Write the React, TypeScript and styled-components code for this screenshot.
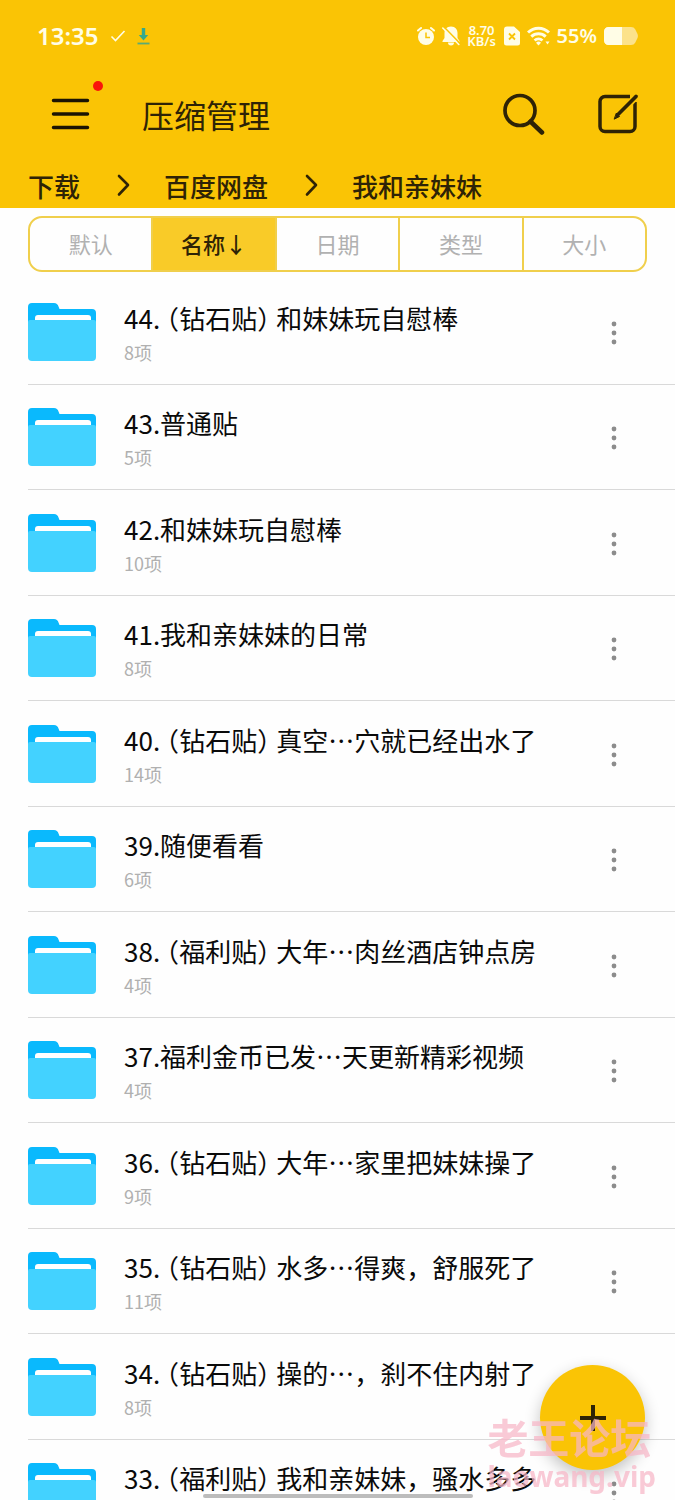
import React from "react";
import styled, { createGlobalStyle } from "styled-components";

const GlobalStyle = createGlobalStyle`
  * { box-sizing: border-box; }
  body {
    margin: 0;
    background: #fefefe;
    font-family: "Noto Sans CJK SC", "Noto Sans", sans-serif;
  }
  button {
    border: 0;
    padding: 0;
    background: none;
    font: inherit;
    color: inherit;
    cursor: pointer;
  }
  svg { display: block; }
`;

const ink = "#2e2306";
const gold = "#fac405";

const Page = styled.div`
  display: flex;
  flex-direction: column;
  height: 100vh;
  overflow: hidden;
`;

const Header = styled.header`
  flex: none;
  background: ${gold};
  color: ${ink};
`;

const StatusBar = styled.div`
  display: flex;
  align-items: center;
  height: 72px;
  padding: 0 37px;
  color: #fffde6;
  font-family: "Noto Sans", sans-serif;
  font-weight: 600;
`;

const StatusGroup = styled.div<{ $gap: number }>`
  display: flex;
  align-items: center;
  gap: ${(p) => p.$gap}px;
`;

const Clock = styled.time`
  font-size: 24px;
  line-height: 28px;
`;

const Spacer = styled.div`
  flex: 1;
`;

const Speed = styled.div`
  width: 30px;
  font-size: 13px;
  line-height: 11px;
  text-align: center;
`;

const Percent = styled.span`
  font-size: 20px;
  line-height: 24px;
`;

const AppBar = styled.div`
  display: flex;
  align-items: center;
  height: 84px;
  padding: 0 36px 0 50px;
`;

const IconButton = styled.button`
  position: relative;
  display: flex;
  flex: none;
`;

const Badge = styled.span`
  position: absolute;
  top: -16px;
  right: -12px;
  width: 10px;
  height: 10px;
  border-radius: 50%;
  background: #f9140a;
`;

const Title = styled.h1`
  flex: 1;
  margin: 0 0 0 51px;
  font-size: 32px;
  line-height: 40px;
  font-weight: 400;
`;

const Actions = styled.div`
  display: flex;
  gap: 52px;
`;

const Crumbs = styled.nav`
  display: flex;
  align-items: center;
  height: 52px;
  padding: 8px 28px 0;
`;

const Crumb = styled.a`
  color: ${ink};
  font-size: 26px;
  line-height: 36px;
  font-weight: 500;
  text-decoration: none;
`;

const CrumbArrow = styled.span`
  margin: 0 34px 0 35px;
`;

const SortBar = styled.div`
  display: flex;
  flex: none;
  height: 56px;
  margin: 8px 28px 7px;
  border: 2px solid #f0cf4c;
  border-radius: 14px;
  overflow: hidden;
`;

const SortButton = styled.button<{ $active?: boolean }>`
  flex: 1;
  padding-bottom: 2px;
  font-size: 22px;
  line-height: 32px;
  font-weight: ${(p) => (p.$active ? 500 : 400)};
  color: ${(p) => (p.$active ? ink : "#b1b1b1")};
  background: ${(p) => (p.$active ? "#f9cb28" : "transparent")};
  & + & {
    border-left: 2px solid #f0cf4c;
  }
`;

const List = styled.ul`
  flex: 1;
  min-height: 0;
  margin: 0 0 0 28px;
  padding: 0;
  list-style: none;
  overflow: hidden;
`;

const Row = styled.li`
  display: flex;
  align-items: center;
  height: 106px;
  border-bottom: 1px solid #d9d9d9;
  &:nth-child(even) {
    height: 105px;
  }
`;

const Info = styled.div`
  flex: 1;
  min-width: 0;
  margin-left: 28px;
`;

const Name = styled.div`
  color: #0a0a0a;
  font-size: 26px;
  line-height: 36px;
  white-space: nowrap;
`;

const Tag = styled.span`
  margin: 0 6px;
  font-feature-settings: "halt";
`;

const Count = styled.div`
  margin-top: 4px;
  color: #b0b0b0;
  font-size: 18px;
  line-height: 24px;
`;

const MoreButton = styled.button`
  flex: none;
  margin-right: 56px;
  padding-top: 2px;
`;

const AddButton = styled.button`
  position: fixed;
  right: 30px;
  bottom: 30px;
  display: grid;
  place-items: center;
  width: 105px;
  height: 105px;
  border-radius: 50%;
  background: ${gold};
  color: ${ink};
  box-shadow: 0 6px 16px rgba(0, 0, 0, 0.24);
`;

const HomeBar = styled.div`
  position: fixed;
  left: 50%;
  bottom: 2px;
  width: 40%;
  height: 4px;
  border-radius: 2px;
  background: #bcbcbc;
  transform: translateX(-50%);
`;

const Watermark = styled.div`
  position: fixed;
  right: 19px;
  bottom: 8px;
  color: rgba(247, 182, 198, 0.72);
  font-weight: 700;
  pointer-events: none;
`;

const WatermarkName = styled.div`
  font-size: 41px;
  line-height: 40px;
`;

const WatermarkSite = styled.div`
  font-family: "Noto Sans", sans-serif;
  font-size: 28px;
  line-height: 32px;
  margin-top: 4px;
`;

const AlarmIcon = () => (
  <svg width="18" height="20" viewBox="0 0 18 20" aria-hidden="true">
    <circle cx="9" cy="11" r="8" fill="currentColor" />
    <path d="M1 4.5 4 2M17 4.5 14 2" stroke="currentColor" strokeWidth="2" strokeLinecap="round" />
    <path d="M9 6.500v5h4" fill="none" stroke={gold} strokeWidth="1.500" />
  </svg>
);

const MutedBellIcon = () => (
  <svg width="18" height="20" viewBox="0 0 18 20" aria-hidden="true">
    <path d="M9 .5c4.500 0 6.500 3 6.500 6.500v5l2 3v1H.5v-1l2-3V7c0-3.500 2-6.500 6.500-6.500Z" fill="currentColor" />
    <path d="M6 16.500h6a3 3 0 0 1-6 0Z" fill="currentColor" />
    <path d="M2 1 18.500 18" stroke={gold} strokeWidth="1.600" />
    <path d="M.8 2 16.800 18.500" stroke="currentColor" strokeWidth="1.600" strokeLinecap="round" />
  </svg>
);

const SimIcon = () => (
  <svg width="16" height="20" viewBox="0 0 16 20" aria-hidden="true">
    <path d="M3 .5h7l6 5.500V17a2.500 2.500 0 0 1-2.500 2.500h-11A2.500 2.500 0 0 1 0 17V3.500a3 3 0 0 1 3-3Z" fill="currentColor" />
    <path d="m5 7.500 6 6m0-6-6 6" stroke={gold} strokeWidth="1.800" />
  </svg>
);

const WifiIcon = () => (
  <svg width="23" height="20" viewBox="0 0 23 20" aria-hidden="true">
    <g fill="none" stroke="currentColor" strokeWidth="3">
      <path d="M1 6.500a15 15 0 0 1 21 0" />
      <path d="M4.300 10.700a10.500 10.500 0 0 1 14.400 0" />
      <path d="M7.600 14.500a5.800 5.800 0 0 1 7.800 0" />
    </g>
    <path d="M9 16.800a3.500 3.500 0 0 1 5 0L11.500 19.500Z" fill="currentColor" />
    <path d="M18.500 15.500h4l-2 3Z" fill="currentColor" />
  </svg>
);

const BatteryIcon = () => (
  <svg width="34" height="18" viewBox="0 0 34 18" aria-hidden="true">
    <path d="M4.500 0H27q3 0 4.200 2.200L33.500 7q.8 2 0 4l-2.300 4.800Q30 18 27 18H4.500A4.500 4.500 0 0 1 0 13.500v-9A4.500 4.500 0 0 1 4.500 0Z" fill="#fce28a" />
    <path d="M4.500 0H18v18H4.500A4.500 4.500 0 0 1 0 13.500v-9A4.500 4.500 0 0 1 4.500 0Z" fill="currentColor" />
  </svg>
);

const CheckIcon = () => (
  <svg width="16" height="14" viewBox="0 0 16 14" aria-hidden="true">
    <path d="m1.500 7.500 4 4L14.500 2" fill="none" stroke="currentColor" strokeWidth="1.600" />
  </svg>
);

const DownloadIcon = () => (
  <svg width="13" height="18" viewBox="0 0 13 18" aria-hidden="true">
    <path d="M4.800 1h3.400v7h3l-4.700 5.500L1.800 8h3Z" fill="#36a98c" />
    <path d="M.5 16.500h12" stroke="#5aab74" strokeWidth="1.800" />
  </svg>
);

const MenuIcon = () => (
  <svg width="41" height="34" viewBox="0 0 41 34" aria-hidden="true">
    <path d="M3.500 3.500h34M3.500 17h34M3.500 30.500h34" stroke="#1b1403" strokeWidth="3.500" strokeLinecap="round" />
  </svg>
);

const SearchIcon = () => (
  <svg width="43" height="42" viewBox="0 0 43 42" fill="none" stroke="currentColor" aria-hidden="true">
    <circle cx="18" cy="17.500" r="15" strokeWidth="3.700" />
    <path d="M28.500 28.500 40 39.500" strokeWidth="4.500" strokeLinecap="round" />
  </svg>
);

const EditIcon = () => (
  <svg width="42" height="42" viewBox="0 0 42 42" fill="none" stroke="currentColor" strokeLinecap="round" aria-hidden="true">
    <path d="M33 3.500H8a5 5 0 0 0-5 5v25a5 5 0 0 0 5 5h25a5 5 0 0 0 5-5V9" strokeWidth="3.500" strokeLinecap="butt" />
    <path d="M39.500 3.500 18.500 24.500" stroke={gold} strokeWidth="6.500" strokeLinecap="butt" />
    <path d="M39 3.500 21 21.500" strokeWidth="3.700" />
    <path d="M19.500 20.500 22.500 23.500 17.500 26Z" fill="currentColor" strokeWidth="1" strokeLinejoin="round" />
  </svg>
);

const ChevronIcon = () => (
  <svg width="15" height="24" viewBox="0 0 15 24" aria-hidden="true">
    <path d="m4 2 9 9-9 9.500" fill="none" stroke="currentColor" strokeWidth="2.600" strokeLinecap="round" strokeLinejoin="round" />
  </svg>
);

const FolderIcon = () => (
  <svg width="68" height="58" viewBox="0 0 68 58" aria-hidden="true">
    <path d="M4 0h22q3.500 0 4.500 3.500L31.500 6H64a4 4 0 0 1 4 4v20H0V4a4 4 0 0 1 4-4Z" fill="#0ab9fd" />
    <path d="M7 20v-5a3 3 0 0 1 3-3h50a3 3 0 0 1 3 3v5Z" fill="#fff" />
    <path d="M0 19a2 2 0 0 1 2-2h64a2 2 0 0 1 2 2v35a4 4 0 0 1-4 4H4a4 4 0 0 1-4-4Z" fill="#43d2ff" />
  </svg>
);

const MoreIcon = () => (
  <svg width="10" height="24" viewBox="0 0 10 24" fill="#8c8c8c" aria-hidden="true">
    <circle cx="5" cy="3" r="2.400" />
    <circle cx="5" cy="12" r="2.400" />
    <circle cx="5" cy="21" r="2.400" />
  </svg>
);

const PlusIcon = () => (
  <svg width="26" height="26" viewBox="0 0 26 26" aria-hidden="true">
    <path d="M13 0v26M0 13h26" stroke="currentColor" strokeWidth="4" />
  </svg>
);

type Folder = { no: number; tag?: string; name: string; count: number };

const folders: Folder[] = [
  { no: 44, tag: "钻石贴", name: "和妹妹玩自慰棒", count: 8 },
  { no: 43, name: "普通贴", count: 5 },
  { no: 42, name: "和妹妹玩自慰棒", count: 10 },
  { no: 41, name: "我和亲妹妹的日常", count: 8 },
  { no: 40, tag: "钻石贴", name: "真空…穴就已经出水了", count: 14 },
  { no: 39, name: "随便看看", count: 6 },
  { no: 38, tag: "福利贴", name: "大年…肉丝酒店钟点房", count: 4 },
  { no: 37, name: "福利金币已发…天更新精彩视频", count: 4 },
  { no: 36, tag: "钻石贴", name: "大年…家里把妹妹操了", count: 9 },
  { no: 35, tag: "钻石贴", name: "水多…得爽，舒服死了", count: 11 },
  { no: 34, tag: "钻石贴", name: "操的…，刹不住内射了", count: 8 },
  { no: 33, tag: "福利贴", name: "我和亲妹妹，骚水多多", count: 8 },
];

const crumbs = ["下载", "百度网盘", "我和亲妹妹"];
const sorts = ["默认", "名称↓", "日期", "类型", "大小"];

export default function App() {
  return (
    <Page lang="zh-CN">
      <GlobalStyle />
      <Header>
        <StatusBar>
          <StatusGroup $gap={11}>
            <Clock>13:35</Clock>
            <CheckIcon />
            <DownloadIcon />
          </StatusGroup>
          <Spacer />
          <StatusGroup $gap={7}>
            <AlarmIcon />
            <MutedBellIcon />
            <Speed>
              <div>8.70</div>
              <div>KB/s</div>
            </Speed>
            <SimIcon />
            <WifiIcon />
            <Percent>55%</Percent>
            <BatteryIcon />
          </StatusGroup>
        </StatusBar>
        <AppBar>
          <IconButton aria-label="菜单">
            <MenuIcon />
            <Badge />
          </IconButton>
          <Title>压缩管理</Title>
          <Actions>
            <IconButton aria-label="搜索">
              <SearchIcon />
            </IconButton>
            <IconButton aria-label="编辑">
              <EditIcon />
            </IconButton>
          </Actions>
        </AppBar>
        <Crumbs>
          {crumbs.map((label, i) => (
            <React.Fragment key={label}>
              {i > 0 && (
                <CrumbArrow>
                  <ChevronIcon />
                </CrumbArrow>
              )}
              <Crumb href="#">{label}</Crumb>
            </React.Fragment>
          ))}
        </Crumbs>
      </Header>
      <SortBar>
        {sorts.map((label, i) => (
          <SortButton key={label} $active={i === 1}>
            {label}
          </SortButton>
        ))}
      </SortBar>
      <List>
        {folders.map((f) => (
          <Row key={f.no}>
            <FolderIcon />
            <Info>
              <Name>
                {f.no}.{f.tag && <Tag>（{f.tag}）</Tag>}
                {f.name}
              </Name>
              <Count>{f.count}项</Count>
            </Info>
            <MoreButton aria-label="更多">
              <MoreIcon />
            </MoreButton>
          </Row>
        ))}
      </List>
      <AddButton aria-label="新建">
        <PlusIcon />
      </AddButton>
      <HomeBar />
      <Watermark>
        <WatermarkName>老王论坛</WatermarkName>
        <WatermarkSite>laowang.vip</WatermarkSite>
      </Watermark>
    </Page>
  );
}
